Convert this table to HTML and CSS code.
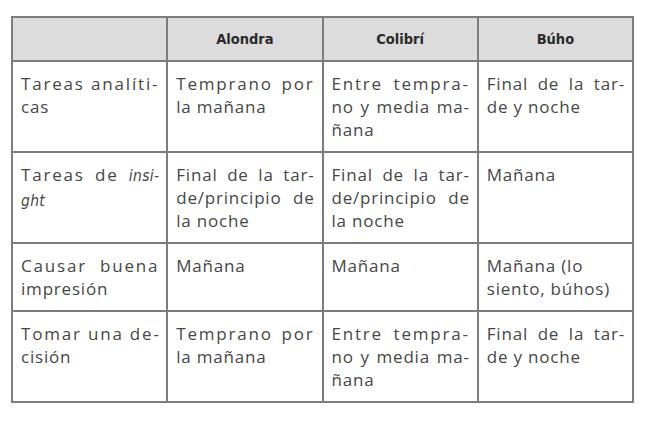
FILE: index.html
```html
<!DOCTYPE html>
<html lang="es">
<head>
<meta charset="utf-8">
<title>Cronotipos</title>
<link rel="stylesheet" href="styles.css">
</head>
<body>
<div class="page">
  <table class="chrono">
    <colgroup><col><col><col><col></colgroup>
    <thead>
      <tr>
        <th></th>
        <th>Alondra</th>
        <th>Colibrí</th>
        <th>Búho</th>
      </tr>
    </thead>
    <tbody>
      <tr>
        <td><span class="ln wide">Tareas analíti-</span><span class="last">cas</span></td>
        <td><span class="ln wide">Temprano por</span><span class="last">la mañana</span></td>
        <td><span class="ln wide">Entre tempra-</span><span class="ln">no y media ma-</span><span class="last">ñana</span></td>
        <td><span class="ln">Final de la tar-</span><span class="last">de y noche</span></td>
      </tr>
      <tr>
        <td><span class="ln wide">Tareas de <em>insi-</em></span><span class="last"><em>ght</em></span></td>
        <td><span class="ln">Final de la tar-</span><span class="ln">de/principio de</span><span class="last">la noche</span></td>
        <td><span class="ln">Final de la tar-</span><span class="ln">de/principio de</span><span class="last">la noche</span></td>
        <td><span class="last">Mañana</span></td>
      </tr>
      <tr>
        <td><span class="ln wide">Causar buena</span><span class="last">impresión</span></td>
        <td><span class="last">Mañana</span></td>
        <td><span class="last">Mañana</span></td>
        <td><span class="ln loose">Mañana (lo</span><span class="last">siento, búhos)</span></td>
      </tr>
      <tr>
        <td><span class="ln wide">Tomar una de-</span><span class="last">cisión</span></td>
        <td><span class="ln wide">Temprano por</span><span class="last">la mañana</span></td>
        <td><span class="ln wide">Entre tempra-</span><span class="ln">no y media ma-</span><span class="last">ñana</span></td>
        <td><span class="ln">Final de la tar-</span><span class="last">de y noche</span></td>
      </tr>
    </tbody>
  </table>
</div>
</body>
</html>
```

FILE: styles.css
```css
html, body {
  margin: 0;
  padding: 0;
  background: #ffffff;
}

.page {
  padding: 16px 0 0 11px;
}

.chrono {
  width: 623px;
  table-layout: fixed;
  border-collapse: collapse;
  border: 2px solid #7c7c7c;
  font-family: "Open Sans", "Noto Sans", sans-serif;
  color: #474747;
}

.chrono th,
.chrono td {
  border: 2px solid #7c7c7c;
}

.chrono th {
  background: #dcdcdc;
  font-family: "DejaVu Sans Condensed", "DejaVu Sans", sans-serif;
  font-weight: bold;
  font-size: 14.5px;
  color: #2a2a2a;
  text-align: center;
  line-height: 20px;
  padding: 11px 8px 11px;
}

.chrono td {
  vertical-align: top;
  font-size: 17px;
  line-height: 23px;
  padding: 10px 7px 10px 8px;
}

.ln {
  display: block;
  white-space: nowrap;
  text-align: justify;
  text-align-last: justify;
  letter-spacing: 0.8px;
}

.ln.wide {
  letter-spacing: 1.8px;
}

.ln.loose {
  text-align-last: left;
}

.last {
  display: block;
  white-space: nowrap;
  text-align: left;
  letter-spacing: 0.8px;
}

.chrono em {
  font-style: italic;
  font-family: "DejaVu Sans Condensed", "DejaVu Sans", sans-serif;
  font-size: 15.5px;
  letter-spacing: 0.3px;
}
```
